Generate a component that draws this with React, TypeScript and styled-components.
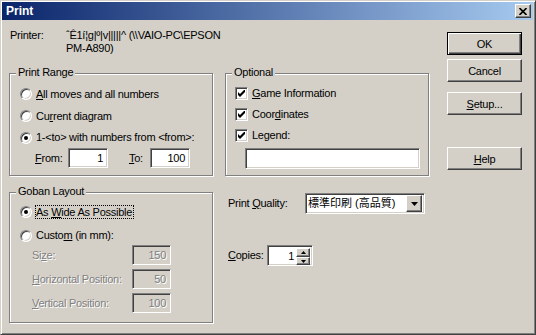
import React, { FC, ReactNode } from 'react'
import styled, { createGlobalStyle, css } from 'styled-components'

const FACE = '#d4d0c8'
const SHADOW = '#808080'
const DARK = '#404040'

const GlobalStyle = createGlobalStyle`
  html, body {
    margin: 0;
    padding: 0;
    background: ${FACE};
  }
  body {
    font-family: 'Liberation Sans', Arial, 'Noto Sans CJK JP', sans-serif;
    font-size: 11px;
  }
`

const sunken = css`
  box-sizing: border-box;
  border: 1px solid;
  border-color: ${SHADOW} #fff #fff ${SHADOW};
  box-shadow: inset 1px 1px ${DARK}, inset -1px -1px ${FACE};
`

const raised = css`
  box-sizing: border-box;
  border: 1px solid;
  border-color: #fff ${DARK} ${DARK} #fff;
  box-shadow: inset -1px -1px ${SHADOW};
  background: ${FACE};
`

const Window = styled.div`
  width: 536px;
  height: 335px;
  box-sizing: border-box;
  border: 1px solid;
  border-color: ${FACE} ${DARK} ${DARK} ${FACE};
  box-shadow: inset 1px 1px #fff, inset -1px -1px ${SHADOW};
  padding: 1px 2px 3px 1px;
  background: ${FACE};
  color: #000;
  letter-spacing: -0.25px;
  display: flex;
  flex-direction: column;
  overflow: hidden;
`

const TitleBar = styled.div`
  height: 18px;
  flex: none;
  display: flex;
  align-items: center;
  justify-content: space-between;
  padding: 0 2px 0 4px;
  background: linear-gradient(to right, #0a246a, #a6caf0);
`

const Title = styled.span`
  color: #fff;
  font-weight: bold;
  font-size: 12px;
  letter-spacing: 0;
`

const CloseButton = styled.div`
  ${raised};
  width: 16px;
  height: 14px;
  display: flex;
  align-items: center;
  justify-content: center;
`

const Body = styled.div`
  flex: 1;
  display: flex;
  padding-left: 7px;
`

const Main = styled.div`
  width: 420px;
  display: flex;
  flex-direction: column;
`

const PrinterRow = styled.div`
  margin-top: 9px;
  padding-left: 1px;
  height: 26px;
  display: flex;
  line-height: 13px;
`

const PrinterLabel = styled.span`
  width: 56px;
  flex: none;
`

const Groups = styled.div`
  margin-top: 18px;
  display: grid;
  grid-template-columns: 204px 204px;
  column-gap: 12px;
`

const Column = styled.div`
  display: flex;
  flex-direction: column;
`

const Group = styled.div<{ $h: number; $pl?: number; $mt?: number }>`
  position: relative;
  box-sizing: border-box;
  height: ${p => p.$h}px;
  margin-top: ${p => p.$mt ?? 0}px;
  border: 1px solid ${SHADOW};
  box-shadow: inset 1px 1px #fff, 1px 1px #fff;
  padding: 9px 0 0 ${p => p.$pl ?? 10}px;
  display: flex;
  flex-direction: column;
`

const GroupTitle = styled.span`
  position: absolute;
  top: -8px;
  left: 6px;
  padding: 0 2px;
  line-height: 13px;
  background: ${FACE};
`

const OptionRow = styled.div<{ $h: number; $mt?: number }>`
  height: ${p => p.$h}px;
  margin-top: ${p => p.$mt ?? 0}px;
  display: flex;
  align-items: center;
  line-height: 13px;
`

const RadioDot = styled.span<{ $checked?: boolean; $mr?: number }>`
  ${sunken};
  position: relative;
  flex: none;
  width: 12px;
  height: 12px;
  margin-right: ${p => p.$mr ?? 4}px;
  border-radius: 50%;
  background: #fff;
  ${p =>
    p.$checked &&
    css`
      &::after {
        content: '';
        position: absolute;
        left: 3px;
        top: 3px;
        width: 4px;
        height: 4px;
        border-radius: 50%;
        background: #000;
      }
    `}
`

const CheckBox = styled.span`
  ${sunken};
  flex: none;
  width: 13px;
  height: 13px;
  margin-right: 4px;
  background: #fff;
  display: flex;
  align-items: center;
  justify-content: center;
`

const FocusLabel = styled.span`
  border: 1px dotted #000;
  line-height: 12px;
  padding-right: 1px;
`

const RangeRow = styled.div`
  height: 20px;
  padding-left: 15px;
  display: flex;
  align-items: center;
`

const FieldLabel = styled.span<{ $w: number; $ml?: number; $disabled?: boolean }>`
  width: ${p => p.$w}px;
  margin-left: ${p => p.$ml ?? 0}px;
  flex: none;
  line-height: 13px;
  ${p =>
    p.$disabled &&
    css`
      color: ${SHADOW};
      text-shadow: 1px 1px #fff;
    `}
`

const TextBox = styled.div<{ $w: number; $h?: number; $disabled?: boolean }>`
  ${sunken};
  width: ${p => p.$w}px;
  height: ${p => p.$h ?? 20}px;
  flex: none;
  padding-right: 4px;
  display: flex;
  align-items: center;
  justify-content: flex-end;
  background: ${p => (p.$disabled ? FACE : '#fff')};
  color: ${p => (p.$disabled ? SHADOW : '#000')};
  text-shadow: ${p => (p.$disabled ? '1px 1px #fff' : 'none')};
`

const LegendBox = styled(TextBox)`
  margin: 2px 0 0 10px;
`

const FieldRows = styled.div`
  display: flex;
  flex-direction: column;
  gap: 4px;
  padding-left: 12px;
`

const FieldRow = styled.div`
  height: 20px;
  display: flex;
  align-items: center;
`

const SettingRow = styled.div<{ $mt: number }>`
  margin-top: ${p => p.$mt}px;
  padding-left: 3px;
  height: 21px;
  display: flex;
  align-items: center;
`

const Select = styled.div`
  ${sunken};
  width: 120px;
  height: 21px;
  padding: 2px;
  display: flex;
  align-items: center;
  background: #fff;
`

const SelectText = styled.span`
  flex: 1;
  letter-spacing: 0;
  line-height: 13px;
  white-space: nowrap;
`

const ArrowButton = styled.div<{ $w: number; $h: number }>`
  ${raised};
  width: ${p => p.$w}px;
  height: ${p => p.$h}px;
  flex: none;
  display: flex;
  align-items: center;
  justify-content: center;
`

const SpinBox = styled.div`
  ${sunken};
  width: 46px;
  height: 21px;
  padding: 2px;
  display: flex;
  background: #fff;
`

const SpinValue = styled.span`
  flex: 1;
  text-align: right;
  padding-right: 2px;
  line-height: 17px;
`

const SpinButtons = styled.div`
  width: 14px;
  display: flex;
  flex-direction: column;
`

const ButtonColumn = styled.div`
  margin-left: 18px;
  padding-top: 12px;
  display: flex;
  flex-direction: column;
`

const DialogButton = styled.div<{ $mt?: number; $default?: boolean }>`
  ${raised};
  width: 75px;
  height: 23px;
  margin-top: ${p => p.$mt ?? 0}px;
  display: flex;
  align-items: center;
  justify-content: center;
  ${p =>
    p.$default &&
    css`
      border: 1px solid #000;
      box-shadow: inset 1px 1px #fff, inset -1px -1px ${DARK}, inset -2px -2px ${SHADOW};
    `}
`

const Check: FC = () => (
  <svg width="7" height="7" viewBox="0 0 7 7">
    <polygon points="0,2 2,4 7,-1 7,2 2,7 0,5" fill="#000" />
  </svg>
)

const Arrow: FC<{ up?: boolean; size?: number }> = ({ up, size = 7 }) => (
  <svg width={size} height={Math.ceil(size / 2)} viewBox={`0 0 ${size} ${Math.ceil(size / 2)}`}>
    {up ? (
      <polygon points={`0,${Math.ceil(size / 2)} ${size},${Math.ceil(size / 2)} ${size / 2},0`} fill="#000" />
    ) : (
      <polygon points={`0,0 ${size},0 ${size / 2},${Math.ceil(size / 2)}`} fill="#000" />
    )}
  </svg>
)

const Radio: FC<{ checked?: boolean; h: number; mt?: number; children: ReactNode }> = ({
  checked,
  h,
  mt,
  children,
}) => (
  <OptionRow $h={h} $mt={mt}>
    <RadioDot $checked={checked} />
    <span>{children}</span>
  </OptionRow>
)

const Option: FC<{ children: ReactNode }> = ({ children }) => (
  <OptionRow $h={21}>
    <CheckBox>
      <Check />
    </CheckBox>
    <span>{children}</span>
  </OptionRow>
)

const DisabledField: FC<{ label: ReactNode; value: string }> = ({ label, value }) => (
  <FieldRow>
    <FieldLabel $w={100} $disabled>
      {label}
    </FieldLabel>
    <TextBox $w={39} $disabled>
      {value}
    </TextBox>
  </FieldRow>
)

const App: FC = () => (
  <Window>
    <GlobalStyle />
    <TitleBar>
      <Title>Print</Title>
      <CloseButton>
        <svg width="8" height="7" viewBox="0 0 8 7">
          <path d="M0.5 0 L7.5 7 M7.5 0 L0.5 7" stroke="#000" strokeWidth="1.6" />
        </svg>
      </CloseButton>
    </TitleBar>

    <Body>
      <Main>
        <PrinterRow>
          <PrinterLabel>Printer:</PrinterLabel>
          <span>
            {'ˆÊ1í¦g|º|v|||||^ (\\\\VAIO-PC\\EPSON'}
            <br />
            PM-A890)
          </span>
        </PrinterRow>

        <Groups>
          <Column>
            <Group $h={103}>
              <GroupTitle>Print Range</GroupTitle>
              <Radio h={22}>
                <u>A</u>ll moves and all numbers
              </Radio>
              <Radio h={22}>
                Cu<u>r</u>rent diagram
              </Radio>
              <Radio h={21} checked>
                {'1-<to> with numbers from <from>:'}
              </Radio>
              <RangeRow>
                <FieldLabel $w={33}>
                  <u>F</u>rom:
                </FieldLabel>
                <TextBox $w={40}>1</TextBox>
                <FieldLabel $w={21} $ml={21}>
                  <u>T</u>o:
                </FieldLabel>
                <TextBox $w={40}>100</TextBox>
              </RangeRow>
            </Group>

            <Group $h={131} $mt={16}>
              <GroupTitle>Goban Layout</GroupTitle>
              <OptionRow $h={20}>
                <RadioDot $checked $mr={3} />
                <FocusLabel>
                  As <u>W</u>ide As Possible
                </FocusLabel>
              </OptionRow>
              <Radio h={19} mt={4}>
                Custo<u>m</u> (in mm):
              </Radio>
              <FieldRows>
                <DisabledField
                  label={
                    <>
                      Si<u>z</u>e:
                    </>
                  }
                  value="150"
                />
                <DisabledField
                  label={
                    <>
                      <u>H</u>orizontal Position:
                    </>
                  }
                  value="50"
                />
                <DisabledField
                  label={
                    <>
                      <u>V</u>ertical Position:
                    </>
                  }
                  value="100"
                />
              </FieldRows>
            </Group>
          </Column>

          <Column>
            <Group $h={103} $pl={9}>
              <GroupTitle>Optional</GroupTitle>
              <Option>
                <u>G</u>ame Information
              </Option>
              <Option>
                Coor<u>d</u>inates
              </Option>
              <Option>Legend:</Option>
              <LegendBox $w={175} $h={21} />
            </Group>

            <SettingRow $mt={17}>
              <FieldLabel $w={77}>
                Print <u>Q</u>uality:
              </FieldLabel>
              <Select>
                <SelectText>標準印刷 (高品質)</SelectText>
                <ArrowButton $w={16} $h={17}>
                  <Arrow />
                </ArrowButton>
              </Select>
            </SettingRow>

            <SettingRow $mt={31}>
              <FieldLabel $w={39}>
                <u>C</u>opies:
              </FieldLabel>
              <SpinBox>
                <SpinValue>1</SpinValue>
                <SpinButtons>
                  <ArrowButton $w={14} $h={9}>
                    <Arrow up size={5} />
                  </ArrowButton>
                  <ArrowButton $w={14} $h={8}>
                    <Arrow size={5} />
                  </ArrowButton>
                </SpinButtons>
              </SpinBox>
            </SettingRow>
          </Column>
        </Groups>
      </Main>

      <ButtonColumn>
        <DialogButton $default>OK</DialogButton>
        <DialogButton $mt={4}>Cancel</DialogButton>
        <DialogButton $mt={10}>
          <u>S</u>etup...
        </DialogButton>
        <DialogButton $mt={32}>
          <u>H</u>elp
        </DialogButton>
      </ButtonColumn>
    </Body>
  </Window>
)

export default App
